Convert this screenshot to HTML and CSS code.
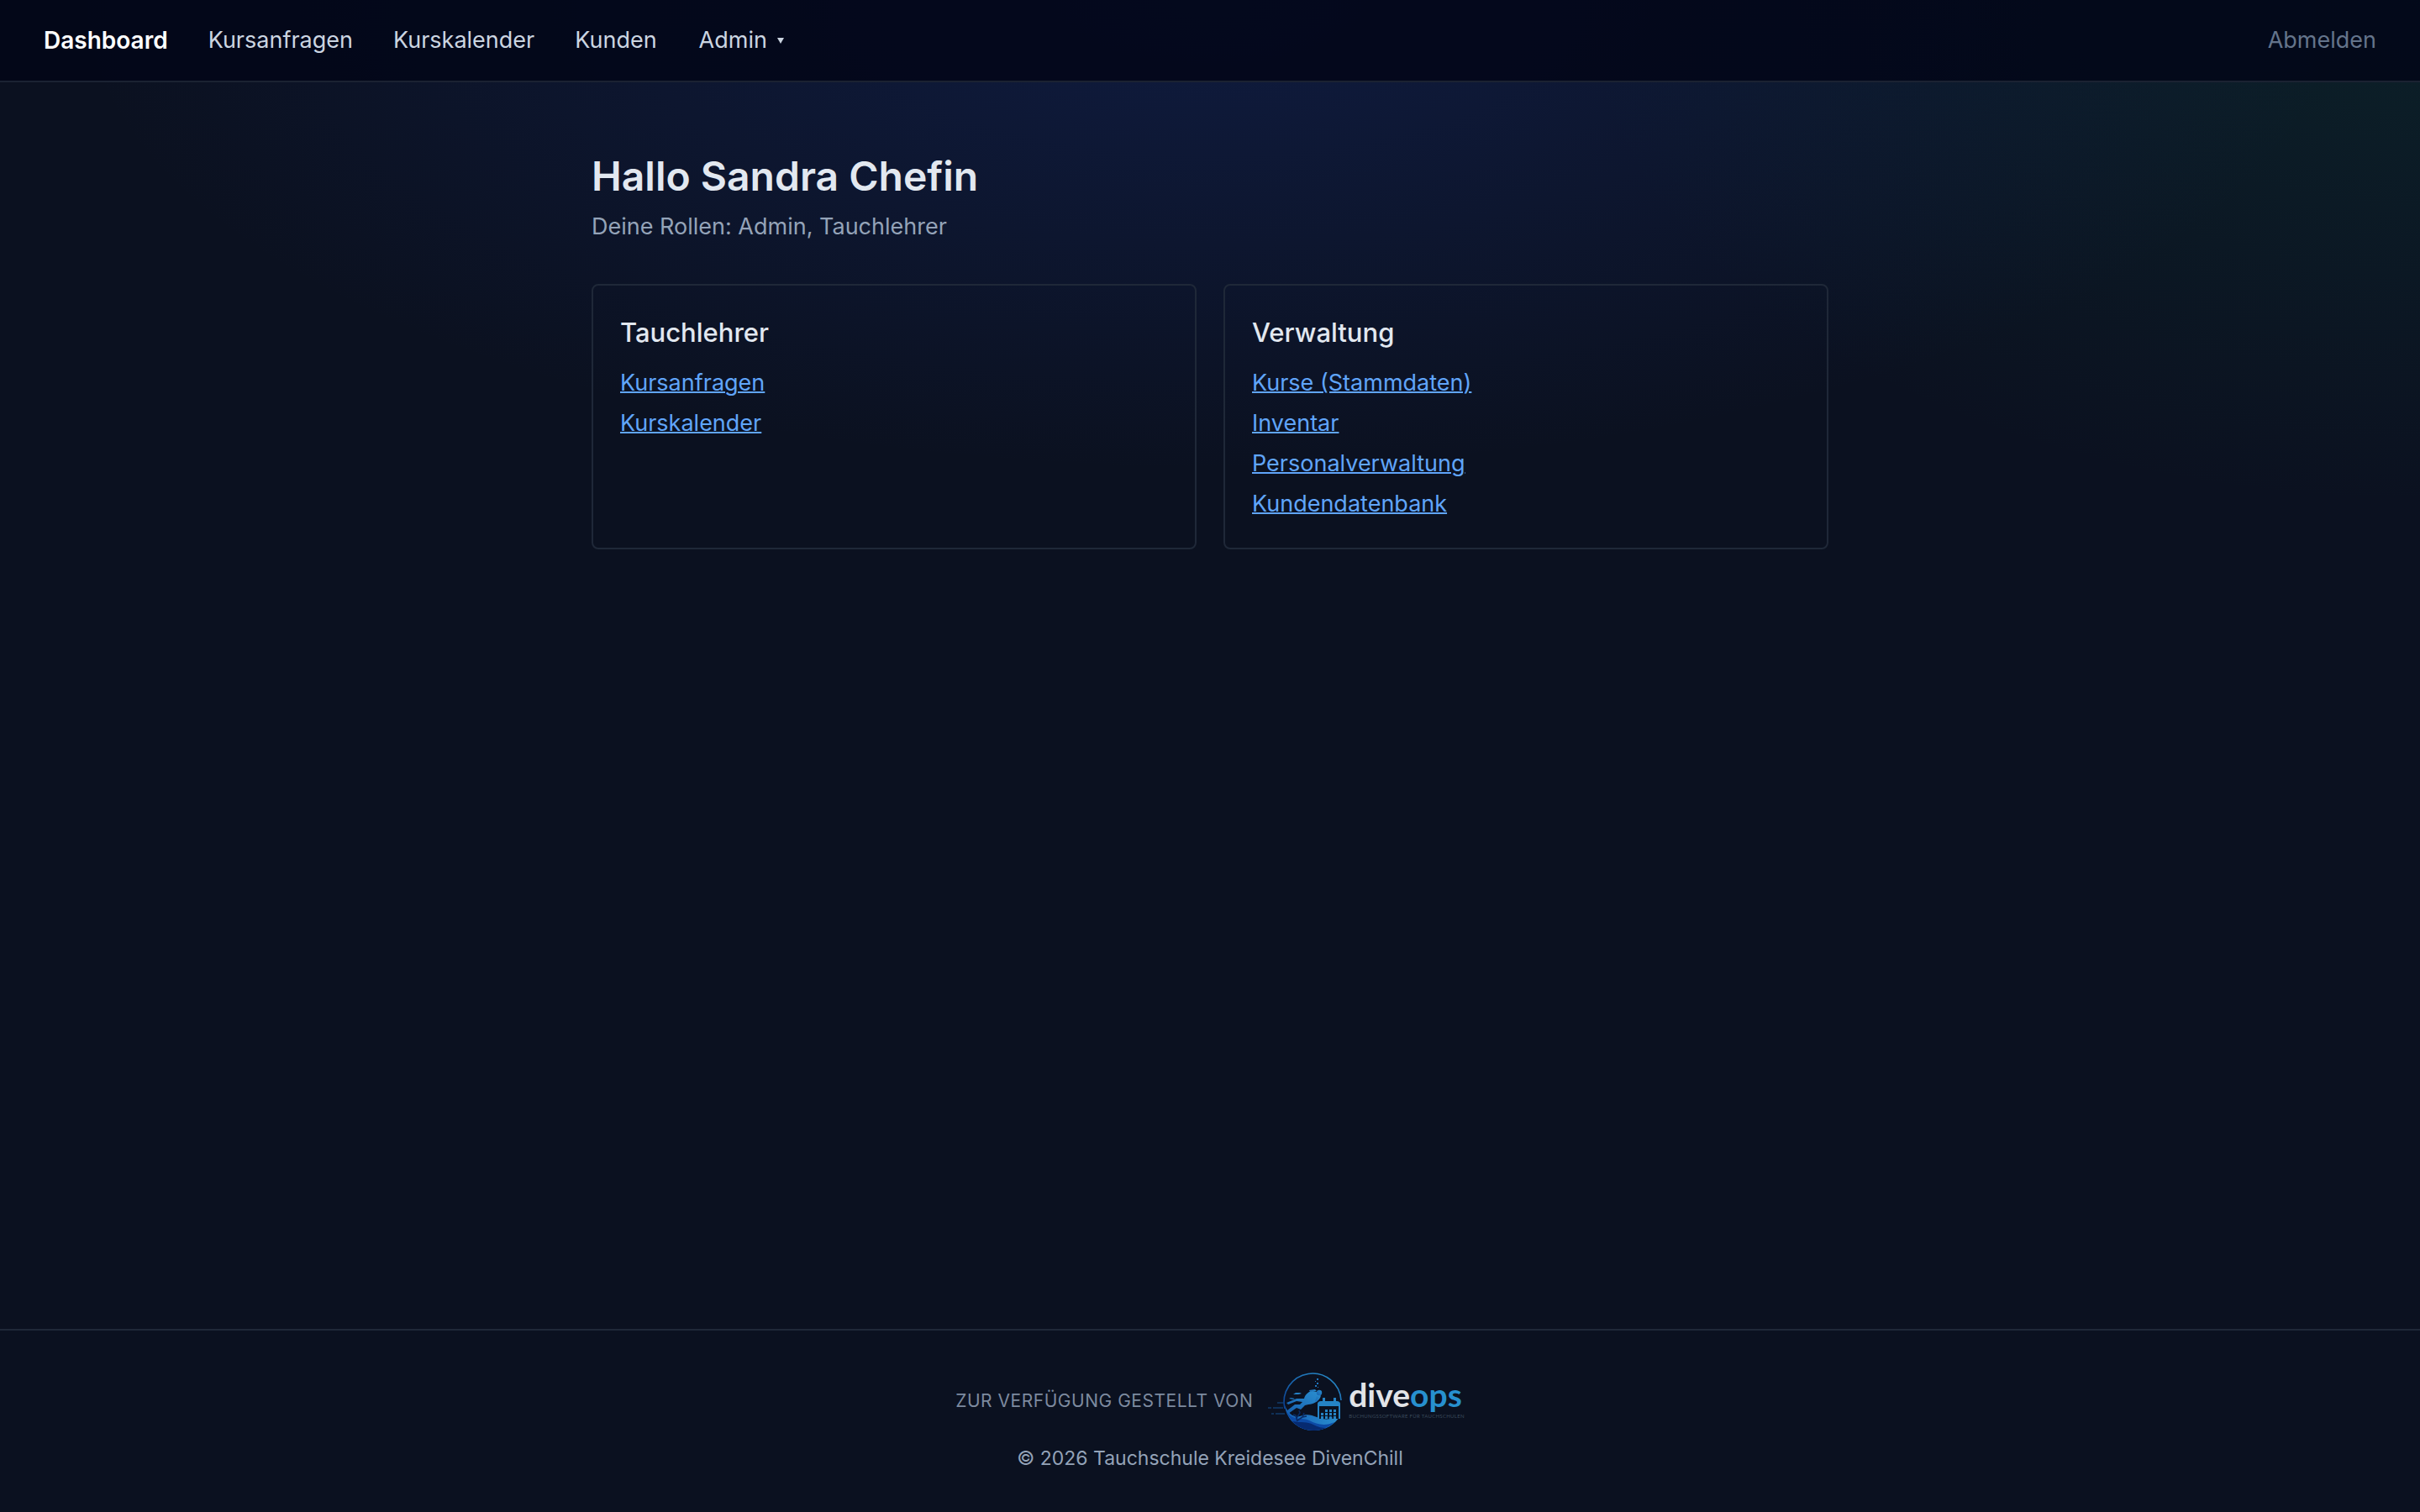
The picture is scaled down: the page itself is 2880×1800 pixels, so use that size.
FILE: index.html
```html
<!DOCTYPE html>
<html lang="de">
<head>
<meta charset="utf-8">
<meta name="viewport" content="width=device-width, initial-scale=1">
<title>Dashboard – Tauchschule Kreidesee DivenChill</title>
<link rel="stylesheet" href="styles.css">
</head>
<body>
<header class="topbar">
  <nav class="nav" aria-label="Hauptnavigation">
    <a class="nav-link nav-link-active" href="#dashboard" aria-current="page">Dashboard</a>
    <a class="nav-link" href="#kursanfragen">Kursanfragen</a>
    <a class="nav-link" href="#kurskalender">Kurskalender</a>
    <a class="nav-link" href="#kunden">Kunden</a>
    <button class="nav-menu" type="button" aria-haspopup="true">Admin
      <svg class="caret" viewBox="0 0 8 8" aria-hidden="true"><path d="M0 1h8L4 8z" fill="currentColor"/></svg>
    </button>
  </nav>
  <button class="logout" type="button">Abmelden</button>
</header>

<main class="page">
  <h1 class="greeting">Hallo Sandra Chefin</h1>
  <p class="roles">Deine Rollen: Admin, Tauchlehrer</p>
  <div class="cards">
    <section class="card">
      <h2 class="card-title">Tauchlehrer</h2>
      <ul class="links">
        <li><a class="link" href="#kursanfragen">Kursanfragen</a></li>
        <li><a class="link" href="#kurskalender">Kurskalender</a></li>
      </ul>
    </section>
    <section class="card">
      <h2 class="card-title">Verwaltung</h2>
      <ul class="links">
        <li><a class="link" href="#kurse">Kurse (Stammdaten)</a></li>
        <li><a class="link" href="#inventar">Inventar</a></li>
        <li><a class="link" href="#personal">Personalverwaltung</a></li>
        <li><a class="link" href="#kundendatenbank">Kundendatenbank</a></li>
      </ul>
    </section>
  </div>
</main>

<footer class="footer">
  <div class="provider">
    <span class="provider-label">Zur Verfügung gestellt von</span>
    <a class="logo" href="#diveops" aria-label="diveops">
      <svg class="logo-mark" viewBox="0 5 92 72" aria-hidden="true">
        <defs>
          <linearGradient id="ring" x1="0" y1="1" x2="1" y2="0">
            <stop offset="0" stop-color="#0a3f92"/><stop offset="1" stop-color="#2a93cf"/>
          </linearGradient>
          <linearGradient id="wave" x1="0" y1="0" x2="1" y2="0">
            <stop offset="0" stop-color="#1560b4"/><stop offset="1" stop-color="#2a8fcf"/>
          </linearGradient>
          <linearGradient id="diver" x1="0" y1="1" x2="1" y2="0">
            <stop offset="0" stop-color="#165fae"/><stop offset="1" stop-color="#2a8fd0"/>
          </linearGradient>
        </defs>
        <path d="M20 50A34 34 0 1 1 87 40" fill="none" stroke="url(#ring)" stroke-width="1.600"/>
        <path d="M20 46C24 56 31 61 38 59C46 56 51 57 58 60C67 64 76 63 86 58C80 69 68 76 54 76C37 76 22 64 20 46Z" fill="url(#wave)"/>
        <path d="M22 53C29 65 40 60 49 64C58 69 69 71 79 66C72 73 63 76 54 76C39 76 27 67 22 53Z" fill="#0c4aa5"/>
        <path d="M29 65C40 67 46 65 54 69C60 72 65 73 69 73C56 79 39 76 29 65Z" fill="#062a70"/>
        <g fill="url(#diver)">
          <path d="M43 38C44 33 49 29 53 29L58 30C62 31 64 34 62 37C60 41 54 45 48 45L44 46L39 51L34 49L24 56L23 52L32 45L38 45L41 42L34 41L24 45L22 43L34 38Z"/>
          <circle cx="61" cy="31" r="3.200"/>
          <path d="M58 35l3 1-3 6-2-1zM49 28l7-1 2 2-8 1z"/>
          <path d="M30 33l3-2h5l2 1-4 1zM25 38l2-1 5 1-2 1zM42 59l5-1 2 1-3 1z"/>
          <rect x="56" y="22" width="2" height="2"/><rect x="59" y="24" width="1" height="1"/>
          <rect x="58" y="19" width="2" height="2"/><rect x="56" y="17" width="1" height="1"/>
          <rect x="58" y="14" width="2" height="2"/>
        </g>
        <path d="M35 65L33 58L30 57M34 61L38 55L37 52M35 64L41 60L43 55M41 60L46 59" fill="none" stroke="#092a63" stroke-width="1.600"/>
        <path d="M60 62V45Q60 42 63 42H82Q85 42 85 45V62" fill="#0a1120" stroke="#2583c5" stroke-width="2"/>
        <path d="M59 47V45Q59 42 62 42H83Q86 42 86 45V47zM65 37h3v6h-3zM78 37h3v6h-3z" fill="#2583c5"/>
        <g fill="#2583c5">
          <path d="M68 51h3v3h-3zM73 51h3v3h-3zM78 51h3v3h-3zM63 55h3v3h-3zM68 55h3v3h-3zM73 55h3v3h-3zM78 55h3v3h-3zM63 59h3v3h-3zM68 59h3v3h-3zM78 59h3v3h-3z"/>
          <circle cx="74.500" cy="61" r="2"/>
        </g>
        <path d="M11 43h7M0 49h4M6 49h12M4 56h3M9 56h11" stroke="#14508f" stroke-width="1"/>
      </svg>
      <span class="logo-words">
        <span class="logo-name">dive<span class="logo-accent">ops</span></span>
        <span class="logo-tagline">Buchungssoftware für Tauchschulen</span>
      </span>
    </a>
  </div>
  <p class="copyright">© 2026 Tauchschule Kreidesee DivenChill</p>
</footer>
</body>
</html>
```
FILE: styles.css
```css
* { box-sizing: border-box; }

body {
  margin: 0;
  min-height: 100vh;
  display: flex;
  flex-direction: column;
  font-family: Inter, "Liberation Sans", sans-serif;
  font-size: 27px;
  line-height: 40px;
  color: #e2e8f0;
  background:
    radial-gradient(ellipse 1350px 560px at 50% 0, rgba(30, 64, 175, 0.22), transparent),
    radial-gradient(ellipse 1000px 600px at 100% 0, rgba(16, 120, 90, 0.15), transparent),
    #0b1120;
}

h1, h2, p, ul { margin: 0; padding: 0; }

.topbar {
  display: flex;
  align-items: center;
  justify-content: space-between;
  padding: 28px 52px;
  border-bottom: 2px solid #1b2232;
  background: rgba(2, 6, 23, 0.85);
}

.nav { display: flex; gap: 48px; }

.nav-link { color: #cbd5e1; text-decoration: none; }
.nav-link-active { color: #fff; font-size: 28px; font-weight: 600; }

.nav-menu, .logout {
  padding: 0;
  border: 0;
  background: none;
  font: inherit;
  cursor: pointer;
}
.nav-menu { display: flex; align-items: center; gap: 12px; padding-left: 2px; color: #cbd5e1; }
.caret { width: 8px; height: 8px; }
.logout { color: #64748b; }

.page {
  flex: 1;
  width: 100%;
  max-width: 1536px;
  margin: 0 auto;
  padding: 80px 32px;
}

.greeting { font-size: 48px; line-height: 64px; font-weight: 600; }
.roles { margin-top: 8px; color: #94a3b8; }

.cards {
  display: grid;
  grid-template-columns: repeat(2, minmax(0, 1fr));
  gap: 32px;
  margin-top: 48px;
}
.card { padding: 32px; border: 2px solid #1f2838; border-radius: 8px; }
.card-title { font-size: 31px; line-height: 48px; font-weight: 500; }
.links {
  display: grid;
  gap: 8px;
  margin-top: 16px;
  list-style: none;
}
.link {
  color: #60a5fa;
  text-decoration: underline;
  text-decoration-thickness: 2px;
}

.footer {
  display: flex;
  flex-direction: column;
  align-items: center;
  gap: 16px;
  padding: 48px 32px;
  border-top: 2px solid #1f2838;
}
.provider { display: flex; align-items: center; gap: 18px; }
.provider-label {
  font-size: 21px;
  letter-spacing: 0.025em;
  text-transform: uppercase;
  color: #7d8a9f;
}
.logo { display: flex; align-items: center; gap: 4px; text-decoration: none; }
.logo-mark { width: 92px; height: 72px; }
.logo-words { display: flex; flex-direction: column; padding-bottom: 4px; }
.logo-name {
  font-family: Lato, sans-serif;
  font-size: 39px;
  line-height: 40px;
  font-weight: 700;
  color: #e2e4e8;
}
.logo-accent { color: #2790cf; }
.logo-tagline {
  font-family: Lato, sans-serif;
  font-size: 6px;
  line-height: 12px;
  letter-spacing: 0.05em;
  text-transform: uppercase;
  color: #3a4a5b;
}
.copyright { font-size: 23px; line-height: 32px; color: #94a3b8; }
```
